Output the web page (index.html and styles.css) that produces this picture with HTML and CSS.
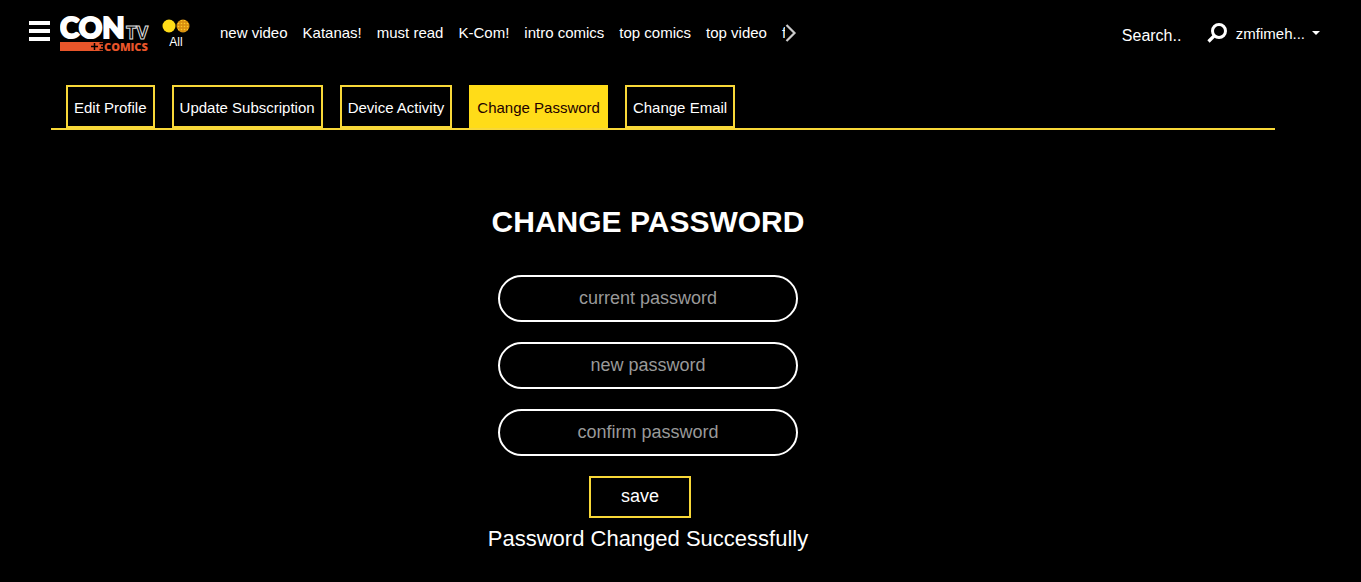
FILE: index.html
```html
<!DOCTYPE html>
<html lang="en">
<head>
  <meta charset="utf-8">
  <title>CONtv + Comics</title>
  <meta name="viewport" content="width=device-width, initial-scale=1.0">
  <link rel="stylesheet" href="styles.css">
</head>
<body>

  <header class="topbar">
    <button class="menu-btn" type="button" aria-label="Menu">
      <span></span>
      <span></span>
      <span></span>
    </button>

    <a class="logo" href="#" aria-label="CONtv Comics">
      <svg width="92" height="56" viewBox="0 0 92 56" aria-hidden="true">
        <text class="logo-con" x="0" y="33">CON</text>
        <text class="logo-tv" x="66" y="34">TV</text>
        <rect x="0" y="37" width="43" height="9" fill="#e8552a" />
        <!-- plus and bracket cut into the bar -->
        <path d="M31 41.500h7M34.500 38v7M43 38.500h-3.500M43 44.500h-3.500M43 41.500h-2" stroke="#000" stroke-width="1.500" />
        <text class="logo-comics" x="44" y="46">COMICS</text>
      </svg>
    </a>

    <a class="filter" href="#">
      <svg width="28" height="14" viewBox="0 0 28 14" aria-hidden="true">
        <defs>
          <pattern id="dots" width="3" height="3" patternUnits="userSpaceOnUse">
            <rect width="3" height="3" fill="#d9900f" />
            <circle cx="1.500" cy="1.500" r="0.800" fill="#ffc928" />
          </pattern>
        </defs>
        <circle cx="21" cy="7" r="6.500" fill="url(#dots)" />
        <circle cx="7" cy="7" r="6.500" fill="#ffdc18" />
      </svg>
      <span>All</span>
    </a>

    <nav class="categories">
      <div class="categories-list">
        <a href="#">new video</a>
        <a href="#">Katanas!</a>
        <a href="#">must read</a>
        <a href="#">K-Com!</a>
        <a href="#">intro comics</a>
        <a href="#">top comics</a>
        <a href="#">top video</a>
        <a href="#">f</a>
      </div>
      <button class="next-btn" type="button" aria-label="Next">
        <svg width="12" height="20" viewBox="0 0 12 20" aria-hidden="true">
          <path d="M1.500 2l8 8-8 8" fill="none" stroke="#ccc" stroke-width="2.200" />
        </svg>
      </button>
    </nav>

    <form class="search">
      <input type="text" placeholder="Search.." aria-label="Search">
      <button type="submit" aria-label="Search">
        <svg width="20" height="20" viewBox="0 0 20 20" aria-hidden="true">
          <circle cx="12" cy="8" r="6.500" fill="none" stroke="#fff" stroke-width="3" />
          <path d="M7.500 12.500L1.500 18.500" stroke="#fff" stroke-width="3.200" />
        </svg>
      </button>
    </form>

    <button class="user" type="button">zmfimeh...<span class="caret"></span></button>
  </header>

  <main>
    <nav class="tabs">
      <a href="#">Edit Profile</a>
      <a href="#">Update Subscription</a>
      <a href="#">Device Activity</a>
      <a class="active" href="#">Change Password</a>
      <a href="#">Change Email</a>
    </nav>

    <form class="password-form">
      <h1>CHANGE PASSWORD</h1>
      <input type="password" placeholder="current password" aria-label="current password">
      <input type="password" placeholder="new password" aria-label="new password">
      <input type="password" placeholder="confirm password" aria-label="confirm password">
      <button type="submit">save</button>
      <p>Password Changed Successfully</p>
    </form>
  </main>

</body>
</html>
```
FILE: styles.css
```css
*, *:before, *:after {
  box-sizing: border-box;
}

body {
  margin: 0;
  background: #000;
  color: #fff;
  font-family: 'Liberation Sans', Arial, sans-serif;
  font-size: 15px;
}

a {
  color: inherit;
  text-decoration: none;
}

button,
input {
  font-family: inherit;
  color: inherit;
  background: none;
  border: 0;
  padding: 0;
}

button {
  cursor: pointer;
}

svg {
  display: block;
}

/* top bar */

.topbar {
  display: flex;
  align-items: center;
  height: 66px;
  padding: 0 41px 0 29px;
}

.menu-btn {
  display: flex;
  flex-direction: column;
  gap: 4px;
  width: 21px;
  margin-right: 10px;
  padding-bottom: 4px;
}

.menu-btn span {
  width: 100%;
  height: 4px;
  background: #fff;
}

.logo-con {
  font-family: Lato, sans-serif;
  font-size: 29px;
  font-weight: 900;
  fill: #fff;
  stroke: #fff;
  stroke-width: 2px;
}

.logo-tv {
  font-family: 'Open Sans', sans-serif;
  font-size: 18px;
  font-weight: 700;
  fill: #000;
  stroke: #ddd;
  stroke-width: 1px;
}

.logo-comics {
  font-family: 'Open Sans', sans-serif;
  font-size: 11px;
  font-weight: 800;
  fill: #e8552a;
}

.filter {
  display: flex;
  flex-direction: column;
  align-items: center;
  gap: 2px;
  margin-left: 10px;
  padding-top: 2px;
  font-size: 12px;
  line-height: 14px;
}

.categories {
  display: flex;
  align-items: center;
  margin-left: 30px;
}

.categories-list {
  display: flex;
  gap: 15px;
  width: 565px;
  padding-bottom: 2px;
  overflow: hidden;
  white-space: nowrap;
}

.search {
  display: flex;
  align-items: center;
  margin-left: auto;
}

.search input {
  width: 85px;
  padding-top: 5px;
  font-size: 16px;
}

.search input::placeholder {
  color: #fff;
  opacity: 1;
}

.user {
  display: flex;
  align-items: center;
  gap: 7px;
  margin-left: 9px;
  font-size: 15px;
}

.caret {
  border-top: 4px solid #fff;
  border-left: 4px solid transparent;
  border-right: 4px solid transparent;
}

/* account pages */

main {
  padding: 19px 65px 0 0;
}

.tabs {
  display: flex;
  gap: 17px;
  margin: 0 21px 0 51px;
  padding: 0 15px;
  border-bottom: 2px solid #f8d838;
}

.tabs a {
  padding: 12px 6px 10px;
  border: 2px solid #f8d838;
  line-height: 17px;
}

.tabs .active {
  background: #ffdc18;
  border-color: #ffdc18;
  color: #200;
}

.password-form {
  display: flex;
  flex-direction: column;
  align-items: center;
  padding-top: 74px;
}

.password-form h1 {
  margin: 0 0 36px;
  font-size: 30px;
  line-height: 35px;
}

.password-form input {
  width: 300px;
  height: 47px;
  margin-bottom: 20px;
  border: 2px solid #fff;
  border-radius: 24px;
  font-size: 18px;
  text-align: center;
}

.password-form input::placeholder {
  color: #999;
  opacity: 1;
}

.password-form button {
  margin-right: 16px;
  padding: 7px 30px 9px;
  border: 2px solid #f8d838;
  font-size: 18px;
  line-height: 22px;
}

.password-form p {
  margin: 8px 0 0;
  font-size: 22px;
  line-height: 25px;
}
```
